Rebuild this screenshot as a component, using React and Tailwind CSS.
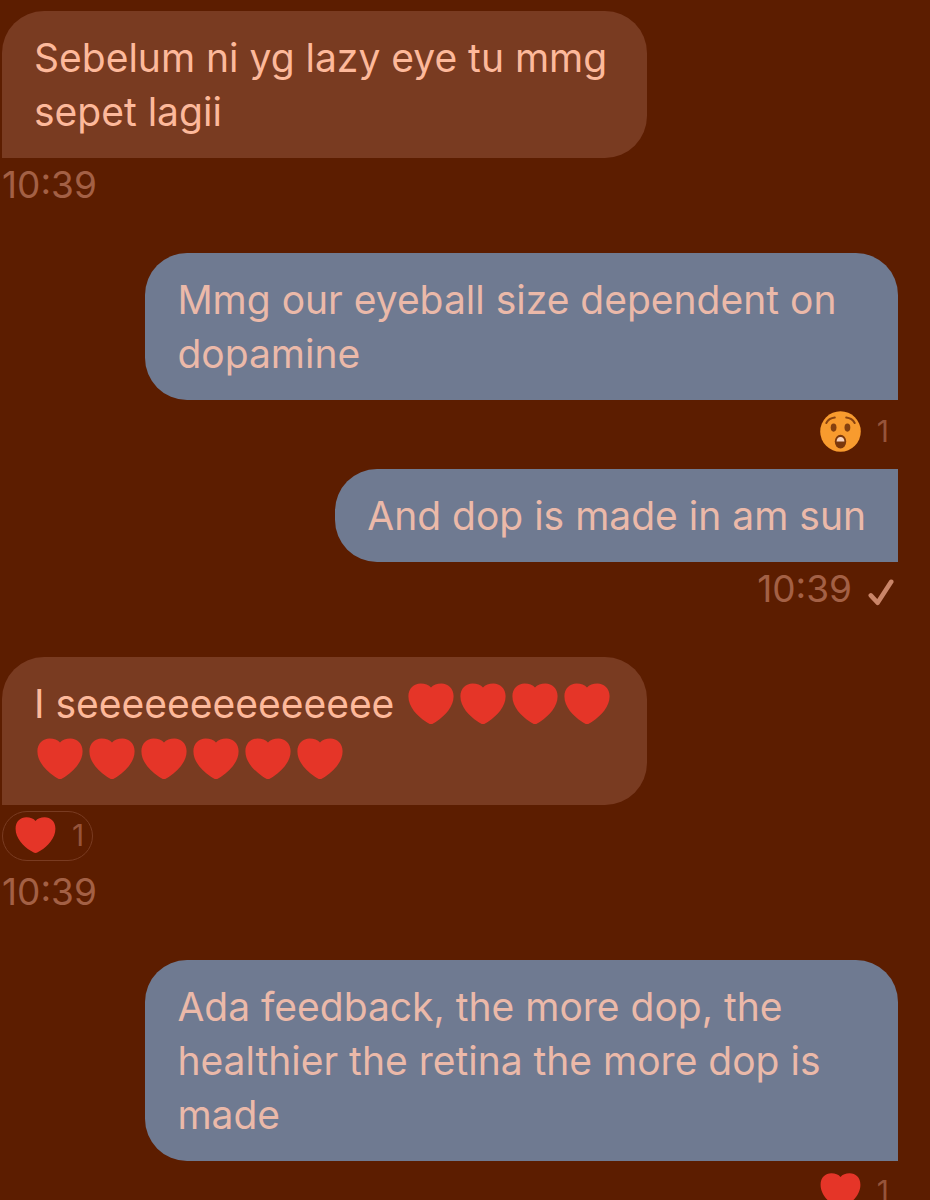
import React from 'react';

const HEART_PATH =
  'M23 41 C21.4 41 19.6 39.7 17.6 38.4 C9 32.6 0.4 23.8 0.4 13.2 C0.4 5.2 6 0.4 12.6 0.4 C17 0.4 20.8 1.8 23 4.6 C25.2 1.8 29 0.4 33.4 0.4 C40 0.4 45.6 5.2 45.6 13.2 C45.6 23.8 37 32.6 28.4 38.4 C26.4 39.7 24.6 41 23 41 Z';

function Heart({ className }) {
  return (
    <svg viewBox="0 0 46 42" role="img" aria-label="red heart" className={className}>
      <path d={HEART_PATH} fill="#e53528" />
    </svg>
  );
}

function Astonished({ className }) {
  return (
    <svg viewBox="0 0 41 41" role="img" aria-label="astonished face" className={className}>
      <circle cx="20.5" cy="20.5" r="20.3" fill="#f89b2e" />
      <g fill="none" stroke="#8a4310" strokeWidth="2" strokeLinecap="round">
        <path d="M6.3 12 C8 8.8 11 7 14.8 6.6" />
        <path d="M26.2 6.6 C30 7 33 8.8 34.7 12" />
      </g>
      <ellipse cx="13.6" cy="16.6" rx="2.9" ry="4.1" fill="#84400f" />
      <ellipse cx="27.4" cy="16.6" rx="2.9" ry="4.1" fill="#84400f" />
      <ellipse cx="20.5" cy="30.6" rx="5.7" ry="6.9" fill="#7a380c" />
      <path d="M16.6 30.6 C16.6 27.6 18.1 25.9 20.5 25.9 C22.9 25.9 24.4 27.6 24.4 30.6 Z" fill="#f6d3bd" />
    </svg>
  );
}

function Tick() {
  return (
    <svg viewBox="0 0 26 27" role="img" aria-label="Sent" className="mt-1.5 h-[27px] w-[26px]">
      <path
        d="M2.8 16.4 L9.6 23.8 L23.2 2.8"
        fill="none"
        stroke="#ca8568"
        strokeWidth="4.6"
        strokeLinecap="round"
        strokeLinejoin="round"
      />
    </svg>
  );
}

function Hearts({ count }) {
  return Array.from({ length: count }, (_, i) => (
    <span key={i} className="inline-block w-[52px] px-[3px] pb-1.5 align-middle">
      <Heart className="block h-[42px] w-[46px]" />
    </span>
  ));
}

function Bubble({ mine, first = true, children }) {
  const side = mine
    ? 'self-end max-w-[84%] bg-[#6f7a91] text-[#ebb9a9] rounded-l-[42px]'
    : 'self-start max-w-[72%] bg-[#793b21] text-[#fdb99b] rounded-t-[42px] rounded-br-[42px]';
  const corner = mine && first ? 'rounded-tr-[42px]' : '';
  return (
    <p className={`px-8 pt-5 pb-[19px] text-[39px] leading-[54px] ${side} ${corner}`}>
      {children}
    </p>
  );
}

function Reaction({ mine, label, icon, count }) {
  const side = mine ? 'self-end border-transparent' : 'self-start border-[#793b21]';
  return (
    <button
      type="button"
      aria-label={label}
      className={`mt-1.5 mb-1 flex h-[50px] items-center gap-4 rounded-full border pl-3 pr-2 text-[30px] text-[#96543a] ${side}`}
    >
      {icon}
      <span>{count}</span>
    </button>
  );
}

function Time({ mine, children }) {
  return (
    <div
      className={`flex h-[54px] items-center gap-4 text-[37px] text-[#a36045] ${
        mine ? 'self-end pr-1' : 'self-start'
      }`}
    >
      <time dateTime={children}>{children}</time>
      {mine && <Tick />}
    </div>
  );
}

export default function App() {
  return (
    <main className="h-screen overflow-hidden bg-[#5c1d00] pt-[11px] pr-8 pl-0.5 font-['Inter','Liberation_Sans',sans-serif]">
      <ol className="flex flex-col gap-[41px]">
        <li className="flex flex-col">
          <Bubble>Sebelum ni yg lazy eye tu mmg sepet lagii</Bubble>
          <Time>10:39</Time>
        </li>
        <li className="flex flex-col">
          <Bubble mine>Mmg our eyeball size dependent on dopamine</Bubble>
          <div className="flex flex-col pb-[9px]">
            <Reaction
              mine
              label="Astonished, 1 reaction"
              icon={<Astonished className="h-[41px] w-[41px]" />}
              count={1}
            />
          </div>
          <Bubble mine first={false}>And dop is made in am sun</Bubble>
          <Time mine>10:39</Time>
        </li>
        <li className="flex flex-col">
          <Bubble>
            I seeeeeeeeeeeeee <Hearts count={10} />
          </Bubble>
          <Reaction
            label="Heart, 1 reaction"
            icon={<Heart className="h-[37px] w-[41px]" />}
            count={1}
          />
          <Time>10:39</Time>
        </li>
        <li className="flex flex-col">
          <Bubble mine>
            Ada feedback, the more dop, the healthier the retina the more dop is made
          </Bubble>
          <Reaction
            mine
            label="Heart, 1 reaction"
            icon={<Heart className="h-[37px] w-[41px]" />}
            count={1}
          />
        </li>
      </ol>
    </main>
  );
}
